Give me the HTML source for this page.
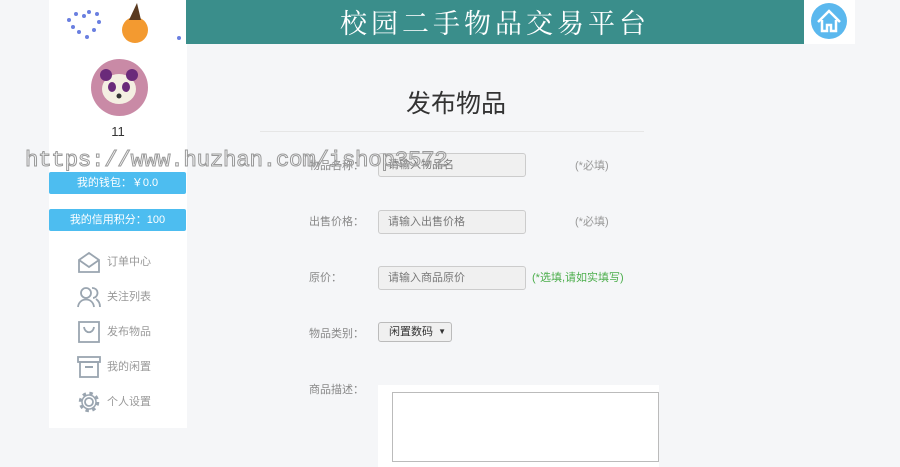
<!DOCTYPE html>
<html><head><meta charset="utf-8"><style>
*{margin:0;padding:0;box-sizing:border-box}
body{width:900px;height:467px;overflow:hidden;background:#f5f6f8;font-family:"Liberation Sans","Noto Sans CJK SC",sans-serif;position:relative;color:#555}
.abs{position:absolute}
.hdr{left:186px;top:0;width:618px;height:44px;background:#3a8e8b;color:#fff;font-size:27px;text-align:center;line-height:44px;letter-spacing:4px;font-family:"Noto Serif CJK SC",serif}
.logo{left:49px;top:0;width:137px;height:44px;background:#fff}
.home{left:804px;top:0;width:51px;height:44px;background:#fff}
.side{left:49px;top:44px;width:138px;height:384px;background:#fff}
.btn{left:49px;width:137px;height:22px;background:#4dbdf0;color:#fff;font-size:11px;text-align:center;line-height:22px;border-radius:2px}
.nav{left:77px;font-size:11px;color:#999;line-height:24px;height:24px}
.nav svg{position:absolute;left:0;top:0}
.nav span{position:absolute;left:30px;top:0;white-space:nowrap}
.lbl{left:309px;font-size:11px;color:#888}
.inp{left:378px;width:148px;height:24px;background:#f0f0f0;border:1px solid #ccc;border-radius:3px;font-size:11px;color:#777;padding-left:9px;line-height:22px}
.req{left:575px;font-size:11px;color:#999}
.wm{left:25px;top:147px;font-family:"Liberation Mono",monospace;font-size:22.5px;color:transparent;-webkit-text-stroke:1px #999;white-space:nowrap;letter-spacing:-0.3px}
</style></head><body>
<div class="abs logo">
<svg width="137" height="44"><g fill="#6a7fe0"><circle cx="20" cy="20" r="2"/><circle cx="27" cy="14" r="2"/><circle cx="35" cy="16" r="2"/><circle cx="40" cy="12" r="2"/><circle cx="48" cy="14" r="2"/><circle cx="50" cy="22" r="2"/><circle cx="45" cy="30" r="2"/><circle cx="38" cy="37" r="2"/><circle cx="30" cy="32" r="2"/><circle cx="24" cy="27" r="2"/></g><circle cx="86" cy="30" r="13" fill="#f39a30"/><polygon points="80,20 92,20 88,3" fill="#5a3a20"/><circle cx="130" cy="38" r="2" fill="#6a7fe0"/></svg></div>
<div class="abs hdr">校园二手物品交易平台</div>
<div class="abs home"><svg width="51" height="44"><circle cx="25" cy="21" r="18" fill="#5bb8ee"/><path d="M14 22 L25 11 L36 22 M18 20 V31 H23 V25 H27 V31 H32 V20" fill="none" stroke="#fff" stroke-width="2.5"/></svg></div>
<div class="abs side"></div>
<div class="abs" style="left:91px;top:59px;width:57px;height:57px;border-radius:50%;background:#c98aa6"><svg width="57" height="57"><ellipse cx="28" cy="30" rx="17" ry="15" fill="#f4efe2"/><circle cx="15" cy="16" r="6" fill="#6a2a7a"/><circle cx="41" cy="16" r="6" fill="#6a2a7a"/><ellipse cx="21" cy="28" rx="4" ry="5" fill="#6a2a7a"/><ellipse cx="35" cy="28" rx="4" ry="5" fill="#6a2a7a"/><circle cx="28" cy="37" r="2.5" fill="#333"/></svg></div>
<div class="abs" style="left:49px;width:138px;top:124px;text-align:center;font-size:13px;color:#333">11</div>
<div class="abs btn" style="top:172px">我的钱包：￥0.0</div>
<div class="abs btn" style="top:209px">我的信用积分：100</div>
<div class="abs nav" style="top:250px"><svg width="24" height="24"><path d="M2 10 L12 3 L22 10 V22 H2 Z M2 10 L12 17 L22 10" fill="none" stroke="#9aa5b0" stroke-width="1.8"/></svg><span>订单中心</span></div>
<div class="abs nav" style="top:285px"><svg width="24" height="24"><circle cx="9" cy="8" r="5" fill="none" stroke="#9aa5b0" stroke-width="1.8"/><path d="M1 22 C2 12 16 12 17 22 M15 3 A5 5 0 0 1 16 13 M19 14 C22 16 23 19 23 22" fill="none" stroke="#9aa5b0" stroke-width="1.8"/></svg><span>关注列表</span></div>
<div class="abs nav" style="top:320px"><svg width="24" height="24"><rect x="2" y="2" width="20" height="20" fill="none" stroke="#9aa5b0" stroke-width="1.8"/><path d="M7 7 C8 14 16 14 17 7" fill="none" stroke="#9aa5b0" stroke-width="1.8"/></svg><span>发布物品</span></div>
<div class="abs nav" style="top:355px"><svg width="24" height="24"><rect x="1" y="2" width="22" height="5" fill="none" stroke="#9aa5b0" stroke-width="1.8"/><rect x="3" y="7" width="18" height="15" fill="none" stroke="#9aa5b0" stroke-width="1.8"/><rect x="8" y="11" width="8" height="2" fill="#9aa5b0"/></svg><span>我的闲置</span></div>
<div class="abs nav" style="top:390px"><svg width="24" height="24"><circle cx="12" cy="12" r="4" fill="none" stroke="#9aa5b0" stroke-width="1.8"/><circle cx="12" cy="12" r="8.5" fill="none" stroke="#9aa5b0" stroke-width="3.5" stroke-dasharray="3.3 3.4"/><circle cx="12" cy="12" r="7" fill="none" stroke="#9aa5b0" stroke-width="1.5"/></svg><span>个人设置</span></div>
<div class="abs" style="left:406px;top:84px;font-size:25px;color:#333">发布物品</div>
<div class="abs" style="left:260px;top:131px;width:384px;height:1px;background:#e6e6e6"></div>
<div class="abs lbl" style="top:157px">物品名称：</div>
<div class="abs inp" style="top:153px">请输入物品名</div>
<div class="abs req" style="top:157px">(*必填)</div>
<div class="abs lbl" style="top:213px">出售价格：</div>
<div class="abs inp" style="top:210px">请输入出售价格</div>
<div class="abs req" style="top:213px">(*必填)</div>
<div class="abs lbl" style="top:269px">原价：</div>
<div class="abs inp" style="top:266px">请输入商品原价</div>
<div class="abs" style="left:532px;top:269px;font-size:11px;color:#4cae4c">(*选填,请如实填写)</div>
<div class="abs lbl" style="top:325px">物品类别：</div>
<div class="abs" style="left:378px;top:322px;width:74px;height:20px;background:#f0f0f0;border:1px solid #bbb;border-radius:3px;font-size:11px;color:#333;line-height:18px;padding-left:10px">闲置数码<span style="position:absolute;right:5px;font-size:8px">▼</span></div>
<div class="abs lbl" style="top:381px">商品描述：</div>
<div class="abs" style="left:378px;top:385px;width:281px;height:82px;background:#fff"></div>
<div class="abs" style="left:392px;top:392px;width:267px;height:70px;border:1px solid #bbb;background:#fff"></div>
<div class="abs wm">https://www.huzhan.com/ishop3572</div>
</body></html>
